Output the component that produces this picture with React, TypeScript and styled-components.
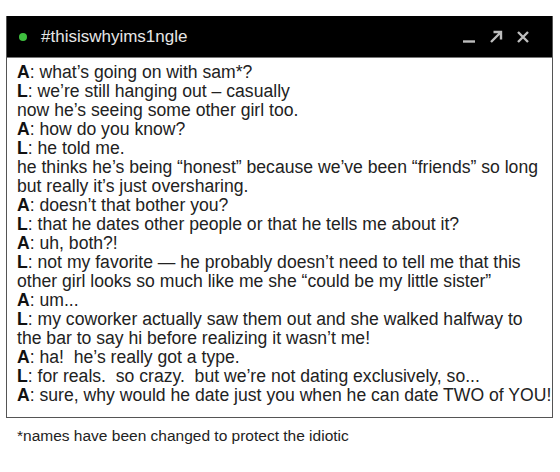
import styled, { createGlobalStyle } from 'styled-components';

type Line = { who?: 'A' | 'L'; text: string };

const lines: Line[] = [
	{ who: 'A', text: 'what\u2019s going on with sam*?' },
	{ who: 'L', text: 'we\u2019re still hanging out \u2013 casually' },
	{ text: 'now he\u2019s seeing some other girl too.' },
	{ who: 'A', text: 'how do you know?' },
	{ who: 'L', text: 'he told me.' },
	{ text: 'he thinks he\u2019s being \u201chonest\u201d because we\u2019ve been \u201cfriends\u201d so long' },
	{ text: 'but really it\u2019s just oversharing.' },
	{ who: 'A', text: 'doesn\u2019t that bother you?' },
	{ who: 'L', text: 'that he dates other people or that he tells me about it?' },
	{ who: 'A', text: 'uh, both?!' },
	{ who: 'L', text: 'not my favorite \u2014 he probably doesn\u2019t need to tell me that this' },
	{ text: 'other girl looks so much like me she \u201ccould be my little sister\u201d' },
	{ who: 'A', text: 'um...' },
	{ who: 'L', text: 'my coworker actually saw them out and she walked halfway to' },
	{ text: 'the bar to say hi before realizing it wasn\u2019t me!' },
	{ who: 'A', text: 'ha!  he\u2019s really got a type.' },
	{ who: 'L', text: 'for reals.  so crazy.  but we\u2019re not dating exclusively, so...' },
	{ who: 'A', text: 'sure, why would he date just you when he can date TWO of YOU!' },
];

const App = () => {
	return (
		<>
			<GlobalStyle />
			<Page>
				<Window>
					<TitleBar>
						<Dot />
						<Title>#thisiswhyims1ngle</Title>
						<Controls>
							<svg width='14' height='14' viewBox='0 0 14 14'>
								<path d='M1 11.5h12' stroke='#bdbdbd' strokeWidth='2.4' />
							</svg>
							<svg width='14' height='14' viewBox='0 0 14 14'>
								<path d='M2 12L12 2M4.5 2H12V9.5' stroke='#bdbdbd' strokeWidth='2.4' fill='none' />
							</svg>
							<svg width='14' height='14' viewBox='0 0 14 14'>
								<path d='M2 2l10 10M12 2L2 12' stroke='#bdbdbd' strokeWidth='2.4' />
							</svg>
						</Controls>
					</TitleBar>
					<Body>
						{lines.map((l, i) => (
							<Row key={i}>
								{l.who && (
									<>
										<Who>{l.who}</Who>:{' '}
									</>
								)}
								{l.text}
							</Row>
						))}
					</Body>
				</Window>
				<Note>*names have been changed to protect the idiotic</Note>
			</Page>
		</>
	);
};

export default App;

const GlobalStyle = createGlobalStyle`
	html, body {
		margin: 0;
		padding: 0;
		background: #fff;
	}
	body {
		font-family: 'Liberation Sans', Arial, sans-serif;
		color: #222;
	}
`;

const Page = styled.div`
	width: 560px;
	height: 472px;
	padding: 16px 0 0 6px;
	box-sizing: border-box;
`;

const Window = styled.div`
	width: 547px;
	border: 1px solid #555;
	border-top: none;
	box-sizing: border-box;
	background: #fff;
`;

const TitleBar = styled.div`
	display: flex;
	align-items: center;
	height: 41px;
	background: #000;
	padding: 0 0 0 12px;
	border-bottom: 1px solid #777;
`;

const Dot = styled.span`
	width: 8px;
	height: 8px;
	border-radius: 50%;
	background: #3fbf3f;
	margin-right: 14px;
`;

const Title = styled.span`
	flex: 1;
	color: #e6e6e6;
	font-size: 17px;
`;

const Controls = styled.div`
	display: flex;
	align-items: center;
	gap: 13px;
	margin-right: 22px;
`;

const Body = styled.div`
	padding: 5px 8px 12px 10px;
	font-size: 17.6px;
	line-height: 19px;
`;

const Row = styled.div`
	white-space: pre;
`;

const Who = styled.b`
	font-weight: 700;
	color: #111;
`;

const Note = styled.p`
	margin: 8px 0 0 11px;
	font-size: 15.5px;
	line-height: 20px;
`;
